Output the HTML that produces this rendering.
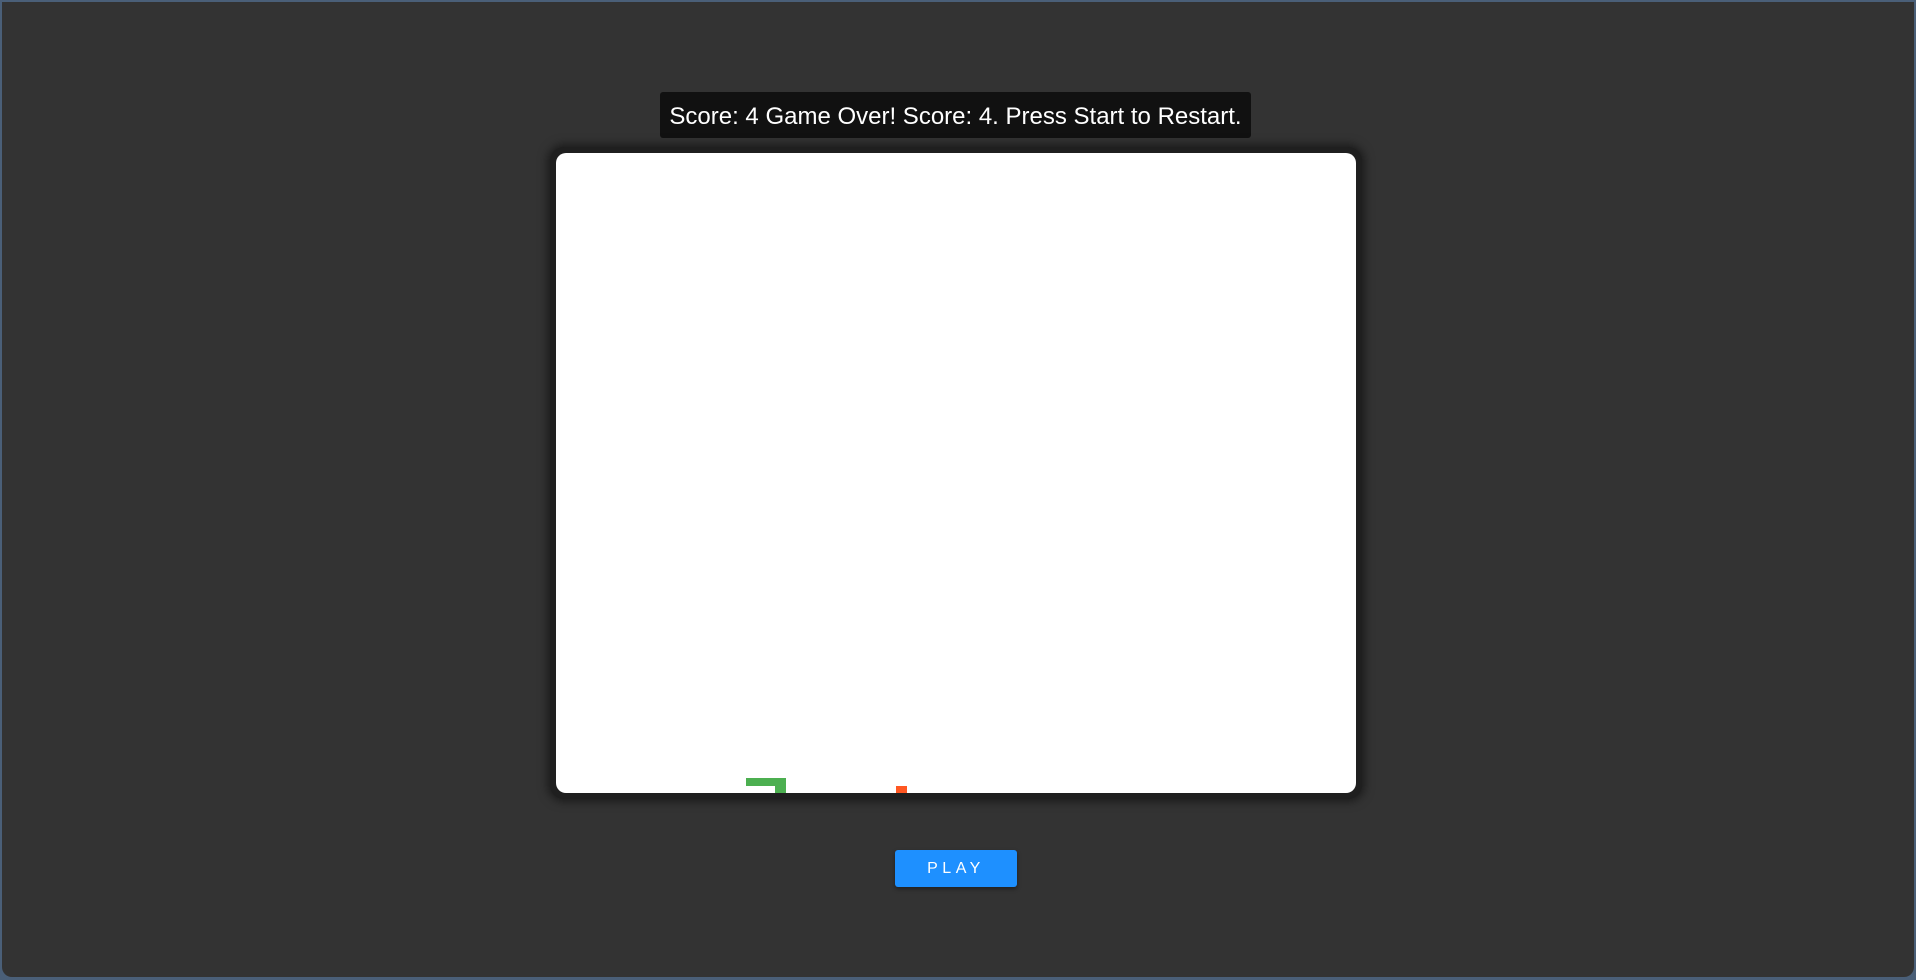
<!DOCTYPE html>
<html><head><style>
html,body{margin:0;padding:0;}
body{width:1916px;height:980px;background:#4a5f78;overflow:hidden;font-family:"Liberation Sans",Arial,sans-serif;}
.page{position:absolute;left:2px;top:2px;width:1912px;height:975px;background:#333;border-radius:0 0 10px 10px;}
.score{position:absolute;left:660px;top:92px;width:591px;height:46px;background:#111;border-radius:3px;color:#fff;font-size:24px;line-height:50px;text-align:center;white-space:nowrap;}
.frame{position:absolute;left:550px;top:147px;width:812px;height:652px;background:#1f1f1f;border-radius:14px;box-shadow:0 0 10px 2px rgba(0,0,0,0.55);}
.inner{position:absolute;left:6px;top:6px;width:800px;height:640px;background:#fff;border-radius:10px;overflow:hidden;}
.play{position:absolute;left:895px;top:850px;width:122px;height:37px;background:#1e90ff;border-radius:3px;color:#fff;font-size:16px;line-height:37px;text-align:center;letter-spacing:4.5px;box-shadow:0 2px 4px rgba(0,0,0,0.4);}
</style></head><body>
<div class="page"></div>
<div class="score">Score: 4 Game Over! Score: 4. Press Start to Restart.</div>
<div class="frame"><div class="inner">
<div style="position:absolute;left:190px;top:625px;width:40px;height:8px;background:#4caf50"></div>
<div style="position:absolute;left:219px;top:625px;width:11px;height:20px;background:#4caf50"></div>
<div style="position:absolute;left:340px;top:633px;width:11px;height:12px;background:#ff5722"></div>
</div></div>
<div class="play">PLAY</div>
</body></html>
